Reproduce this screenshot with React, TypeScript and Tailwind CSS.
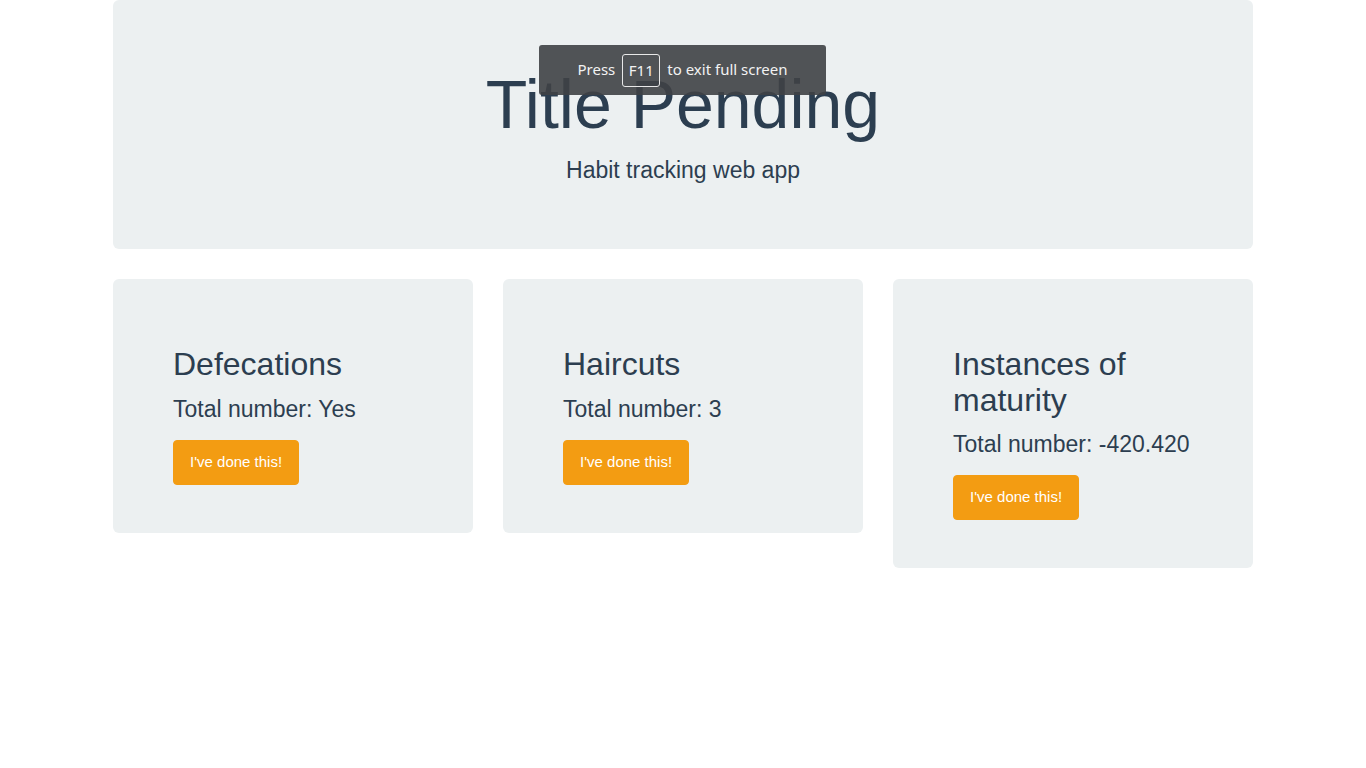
import React from 'react';

const habits = [
  { name: 'Defecations', total: 'Yes' },
  { name: 'Haircuts', total: '3' },
  { name: 'Instances of maturity', total: '-420.420' },
];

function HabitCard({ name, total }: { name: string; total: string }) {
  return (
    <div className="bg-[#ecf0f1] rounded-md pt-[68px] pb-[48px] px-[60px]">
      <h2 className="text-[32px] leading-[35.5px] text-[#2c3e50] mb-[12px]">{name}</h2>
      <h4 className="text-[23px] leading-[28px] text-[#2c3e50] mb-[17px]">Total number: {total}</h4>
      <button className="h-[45px] px-4 bg-[#f39c12] border border-[#f39c12] rounded text-white text-[15px]">
        I've done this!
      </button>
    </div>
  );
}

export default function App() {
  return (
    <div className="relative min-h-screen bg-white font-['Liberation_Sans',Arial,sans-serif]">
      <div className="w-[1140px] mx-auto">
        <div className="bg-[#ecf0f1] rounded-md pt-16 pb-[62px] px-8 text-center text-[#2c3e50]">
          <h1 className="text-[68px] leading-[81px] mb-[8px]">Title Pending</h1>
          <p className="text-[23px] leading-[34px]">Habit tracking web app</p>
        </div>

        <div className="grid grid-cols-3 gap-[30px] mt-[30px] items-start">
          {habits.map((h) => (
            <HabitCard key={h.name} name={h.name} total={h.total} />
          ))}
        </div>
      </div>

      <div className="absolute top-[45px] left-[539px] w-[287px] h-[50px] rounded-[3px] bg-[rgba(63,65,69,0.9)] flex items-center justify-center gap-[7px] font-['Noto_Sans',sans-serif] text-[15px] text-[#f2f2f2]">
        <span className="-mt-[1px]">Press</span>
        <span className="h-[33px] w-[38px] flex items-center justify-center border border-[#e8e8e8] rounded-[3px]">F11</span>
        <span className="-mt-[1px]">to exit full screen</span>
      </div>
    </div>
  );
}
